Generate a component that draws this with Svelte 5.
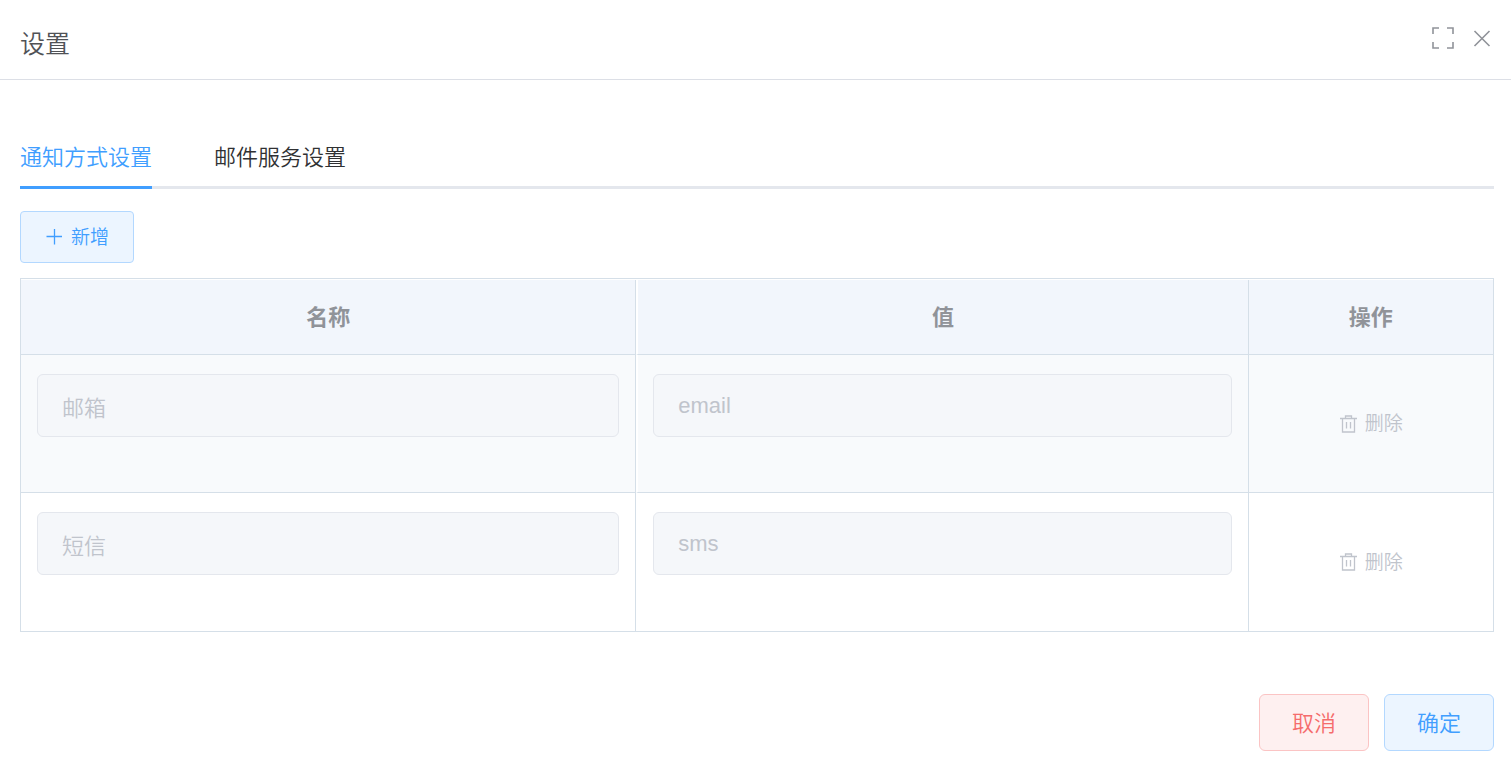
<script>
  const tabs = ['通知方式设置', '邮件服务设置'];

  let activeTab = $state(0);
  let fullscreen = $state(false);
  let rows = $state([
    { name: '邮箱', value: 'email', builtin: true },
    { name: '短信', value: 'sms', builtin: true }
  ]);

  function addRow() {
    rows.push({ name: '', value: '', builtin: false });
  }

  function removeRow(index) {
    rows.splice(index, 1);
  }
</script>

<section class="dialog" role="dialog" aria-labelledby="dialog-title">
  <header class="dialog-header">
    <h1 id="dialog-title">设置</h1>
    <div class="header-actions">
      <button class="icon-btn" aria-label="全屏" onclick={() => (fullscreen = !fullscreen)}>
        <svg width="22" height="22" viewBox="0 0 22 22">
          <path d="M1 7V1H7M15 1H21V7M21 15V21H15M7 21H1V15" />
        </svg>
      </button>
      <button class="icon-btn" aria-label="关闭">
        <svg width="22" height="22" viewBox="0 0 22 22">
          <path d="M3.5 4L18.5 19M18.5 4L3.5 19" />
        </svg>
      </button>
    </div>
  </header>

  <div class="dialog-body">
    <div class="tabs" role="tablist">
      {#each tabs as tab, i}
        <button
          class="tab"
          class:active={activeTab === i}
          role="tab"
          aria-selected={activeTab === i}
          onclick={() => (activeTab = i)}
        >{tab}</button>
      {/each}
    </div>

    <button class="btn primary add" onclick={addRow}>
      <svg width="18" height="18" viewBox="0 0 18 18">
        <path d="M1.5 8.5H17M9.5 1V16.5" />
      </svg>
      <span>新增</span>
    </button>

    <table>
      <colgroup>
        <col class="col-name" />
        <col class="col-value" />
        <col />
      </colgroup>
      <thead>
        <tr>
          <th>名称</th>
          <th>值</th>
          <th>操作</th>
        </tr>
      </thead>
      <tbody>
        {#each rows as row, i}
          <tr>
            <td class="field">
              <input type="text" aria-label="名称" bind:value={row.name} disabled={row.builtin} />
            </td>
            <td class="field">
              <input type="text" aria-label="值" bind:value={row.value} disabled={row.builtin} />
            </td>
            <td class="ops">
              <button class="text-btn" disabled={row.builtin} onclick={() => removeRow(i)}>
                <svg width="18" height="18" viewBox="0 0 18 18">
                  <path d="M1 3.5H18M3.5 3.5V17H15.5V3.5M6.5 3.5V1H12.5V3.5M7.5 7V13.5M11.5 7V13.5" />
                </svg>
                <span>删除</span>
              </button>
            </td>
          </tr>
        {/each}
      </tbody>
    </table>
  </div>

  <footer class="dialog-footer">
    <button class="btn danger">取消</button>
    <button class="btn primary">确定</button>
  </footer>
</section>

<style>
  :global(body) {
    background: #fff;
  }

  .dialog,
  .dialog button,
  .dialog input {
    font-family: "Liberation Sans", "Noto Sans CJK SC", sans-serif;
    font-weight: 350;
  }

  button {
    cursor: pointer;
  }

  svg {
    display: block;
    fill: none;
    stroke: currentColor;
    stroke-width: 1.3;
  }

  .dialog-header {
    display: flex;
    justify-content: space-between;
    align-items: flex-start;
    padding: 26px 18px 17px 20px;
    border-bottom: 1px solid #dcdfe6;
  }

  h1 {
    margin: 0;
    font-size: 25px;
    font-weight: 350;
    line-height: 36px;
    color: #505256;
  }

  .header-actions {
    display: flex;
    gap: 17px;
    padding-top: 1px;
  }

  .icon-btn {
    padding: 0;
    border: none;
    background: none;
    color: #909399;
  }

  .icon-btn svg {
    stroke-width: 1.6;
  }

  .dialog-body {
    padding: 58px 17px 0 20px;
  }

  .tabs {
    display: flex;
    gap: 62px;
    box-shadow: inset 0 -3px #e4e7ed;
  }

  .tab {
    padding: 0 0 8px;
    border: none;
    border-bottom: 3px solid transparent;
    background: none;
    font-size: 22px;
    line-height: 40px;
    color: #303133;
  }

  .tab.active {
    color: #409eff;
    border-bottom-color: #409eff;
  }

  .btn {
    box-sizing: border-box;
    border: 1px solid;
    border-radius: 6px;
    padding: 0 32px 4px;
    height: 57px;
    font-size: 22px;
  }

  .btn.primary {
    color: #409eff;
    background: #ecf5ff;
    border-color: #b3d8ff;
  }

  .btn.danger {
    color: #f56c6c;
    background: #fef0f0;
    border-color: #fbc4c4;
  }

  .btn.add {
    display: flex;
    align-items: center;
    gap: 8px;
    height: 52px;
    margin: 22px 0 15px;
    padding: 0 24px;
    border-radius: 4px;
    font-size: 19px;
  }

  .btn.add span,
  .text-btn span {
    padding-bottom: 4px;
  }

  table {
    width: 100%;
    table-layout: fixed;
    border-collapse: separate;
    border-spacing: 0;
    border: 1px solid #d5dfe8;
    padding-top: 1px;
  }

  .col-name {
    width: 41.8%;
  }

  .col-value {
    width: 41.6%;
  }

  th,
  td {
    box-sizing: border-box;
    border-right: 1px solid #d5dfe8;
    border-bottom: 1px solid #d5dfe8;
    background-clip: padding-box;
  }

  th:last-child,
  td:last-child {
    border-right: none;
  }

  th:nth-child(2),
  td:nth-child(2) {
    border-left: 2px solid #fff;
  }

  tbody tr:last-child td {
    border-bottom: none;
  }

  th {
    height: 75px;
    padding: 0 0 4px;
    background-color: #f2f6fc;
    font-size: 22px;
    font-weight: 700;
    color: #909399;
  }

  td {
    height: 138px;
    padding: 0 16px;
  }

  td:nth-child(2) {
    padding-left: 15px;
  }

  tbody tr:nth-child(odd) td {
    background-color: #f8fafc;
  }

  .field {
    padding-top: 19px;
    vertical-align: top;
  }

  input {
    box-sizing: border-box;
    display: block;
    width: 100%;
    height: 63px;
    padding: 0 24px;
    border: 1px solid #dcdfe6;
    border-radius: 6px;
    font-size: 22px;
    color: #606266;
  }

  input:disabled {
    background: #f5f7fa;
    border-color: #e4e7ed;
    color: #c0c4cc;
  }

  .text-btn {
    display: flex;
    align-items: center;
    gap: 8px;
    margin: 0 auto;
    padding: 0;
    border: none;
    background: none;
    font-size: 19px;
    color: #409eff;
  }

  .text-btn:disabled {
    color: #c0c4cc;
    cursor: not-allowed;
  }

  .dialog-footer {
    display: flex;
    justify-content: flex-end;
    gap: 15px;
    padding: 62px 17px 16px;
  }
</style>
